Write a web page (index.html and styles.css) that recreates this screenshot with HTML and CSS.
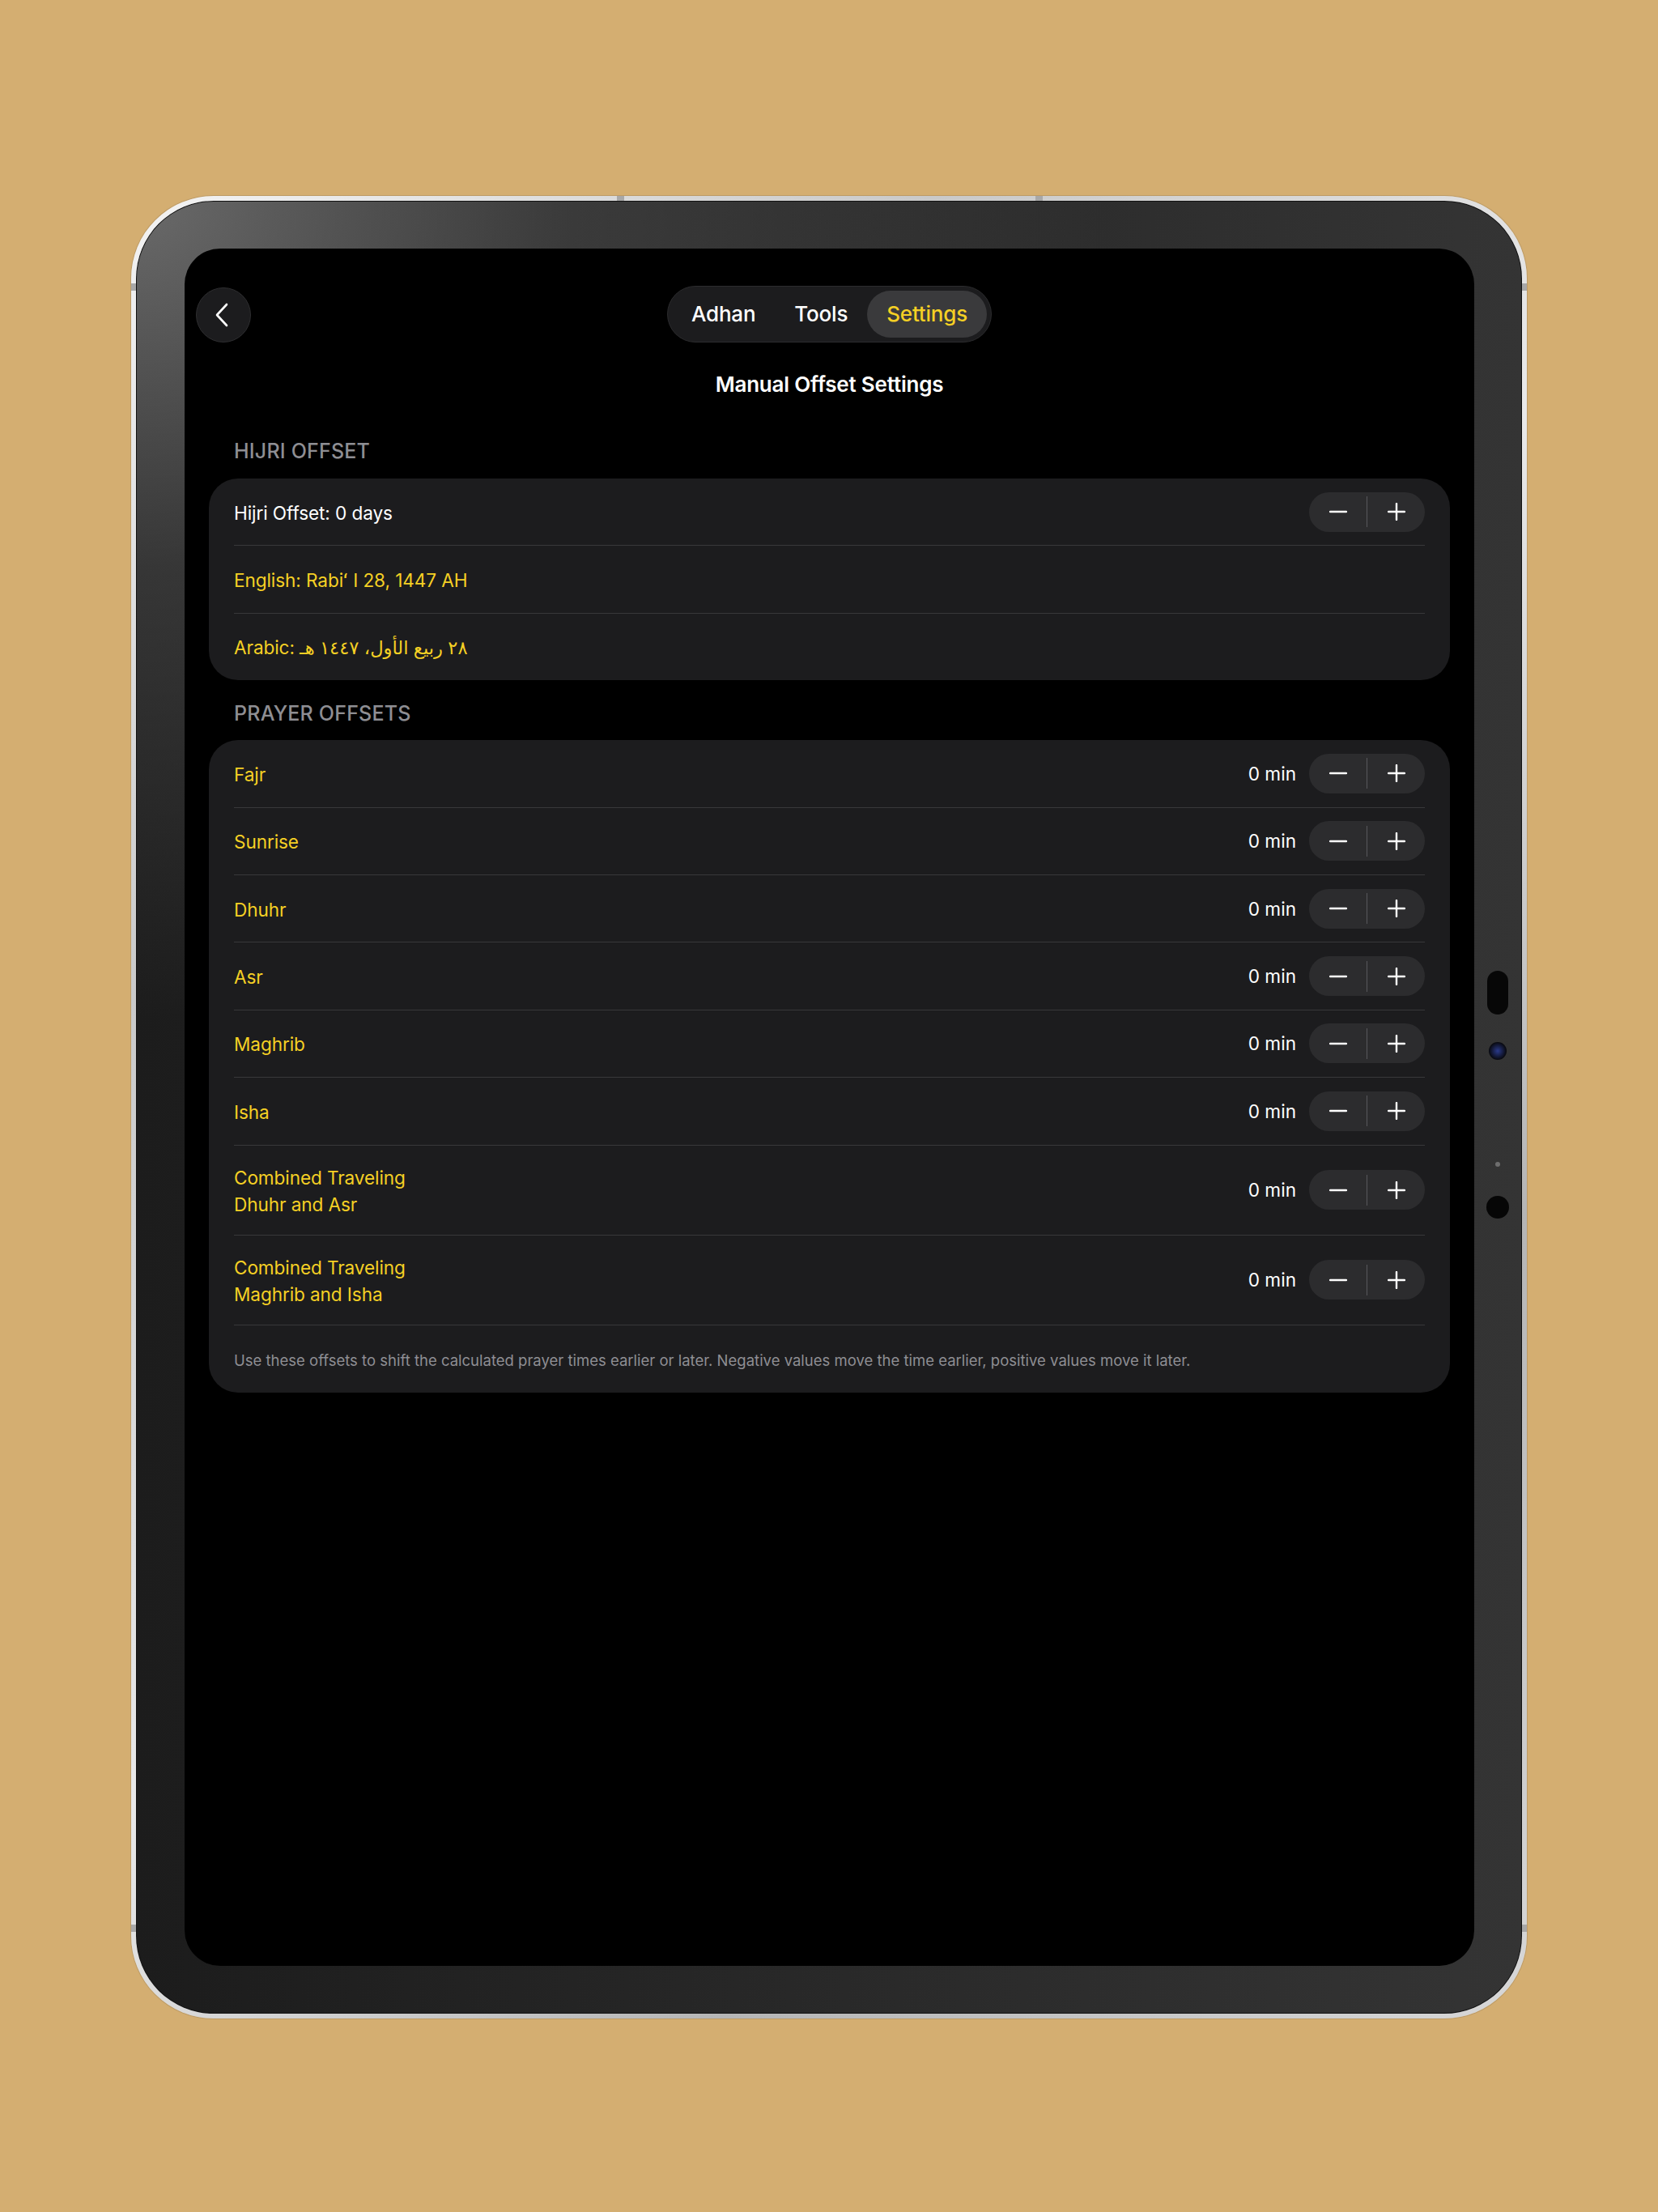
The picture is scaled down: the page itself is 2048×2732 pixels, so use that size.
FILE: index.html
```html
<!DOCTYPE html>
<html lang="en">
<head>
<meta charset="utf-8">
<title>Manual Offset Settings</title>
<link rel="stylesheet" href="styles.css">
</head>
<body>
<div class="device">
  <span class="notch notch-top-a"></span>
  <span class="notch notch-top-b"></span>
  <span class="notch notch-left-a"></span>
  <span class="notch notch-left-b"></span>
  <span class="notch notch-right-a"></span>
  <span class="notch notch-right-b"></span>
  <div class="bezel">
    <span class="sensor"></span>
    <span class="lens"></span>
    <span class="dot"></span>
    <span class="hole"></span>
    <div class="screen">
      <div class="topbar">
        <button class="back" aria-label="Back">
          <svg width="18" height="30" viewBox="0 0 18 30"><path d="M15 2 L3 15 L15 28" fill="none" stroke="#fff" stroke-width="2.6" stroke-linecap="round" stroke-linejoin="round"/></svg>
        </button>
        <div class="tabs">
          <span class="tab">Adhan</span>
          <span class="tab">Tools</span>
          <span class="tab active">Settings</span>
        </div>
        <div class="spacer"></div>
      </div>

      <h1 class="title">Manual Offset Settings</h1>

      <div class="section-header hijri-header">HIJRI OFFSET</div>
      <div class="card">
        <div class="row">
          <span class="label white">Hijri Offset: 0 days</span>
          <div class="stepper">
            <span class="step"><svg width="22" height="22" viewBox="0 0 22 22"><path d="M1 11H21" stroke="#fff" stroke-width="2.4" stroke-linecap="round"/></svg></span>
            <span class="divider"></span>
            <span class="step"><svg width="22" height="22" viewBox="0 0 22 22"><path d="M1 11H21M11 1V21" stroke="#fff" stroke-width="2.4" stroke-linecap="round"/></svg></span>
          </div>
        </div>
        <div class="row"><span class="label">English: Rabiʻ I 28, 1447 AH</span></div>
        <div class="row"><span class="label">Arabic: ٢٨ ربيع الأول، ١٤٤٧ هـ</span></div>
      </div>

      <div class="section-header prayer-header">PRAYER OFFSETS</div>
      <div class="card">
        <div class="row">
          <span class="label">Fajr</span>
          <span class="value">0 min</span>
          <div class="stepper">
            <span class="step"><svg width="22" height="22" viewBox="0 0 22 22"><path d="M1 11H21" stroke="#fff" stroke-width="2.4" stroke-linecap="round"/></svg></span>
            <span class="divider"></span>
            <span class="step"><svg width="22" height="22" viewBox="0 0 22 22"><path d="M1 11H21M11 1V21" stroke="#fff" stroke-width="2.4" stroke-linecap="round"/></svg></span>
          </div>
        </div>
        <div class="row">
          <span class="label">Sunrise</span>
          <span class="value">0 min</span>
          <div class="stepper">
            <span class="step"><svg width="22" height="22" viewBox="0 0 22 22"><path d="M1 11H21" stroke="#fff" stroke-width="2.4" stroke-linecap="round"/></svg></span>
            <span class="divider"></span>
            <span class="step"><svg width="22" height="22" viewBox="0 0 22 22"><path d="M1 11H21M11 1V21" stroke="#fff" stroke-width="2.4" stroke-linecap="round"/></svg></span>
          </div>
        </div>
        <div class="row">
          <span class="label">Dhuhr</span>
          <span class="value">0 min</span>
          <div class="stepper">
            <span class="step"><svg width="22" height="22" viewBox="0 0 22 22"><path d="M1 11H21" stroke="#fff" stroke-width="2.4" stroke-linecap="round"/></svg></span>
            <span class="divider"></span>
            <span class="step"><svg width="22" height="22" viewBox="0 0 22 22"><path d="M1 11H21M11 1V21" stroke="#fff" stroke-width="2.4" stroke-linecap="round"/></svg></span>
          </div>
        </div>
        <div class="row">
          <span class="label">Asr</span>
          <span class="value">0 min</span>
          <div class="stepper">
            <span class="step"><svg width="22" height="22" viewBox="0 0 22 22"><path d="M1 11H21" stroke="#fff" stroke-width="2.4" stroke-linecap="round"/></svg></span>
            <span class="divider"></span>
            <span class="step"><svg width="22" height="22" viewBox="0 0 22 22"><path d="M1 11H21M11 1V21" stroke="#fff" stroke-width="2.4" stroke-linecap="round"/></svg></span>
          </div>
        </div>
        <div class="row">
          <span class="label">Maghrib</span>
          <span class="value">0 min</span>
          <div class="stepper">
            <span class="step"><svg width="22" height="22" viewBox="0 0 22 22"><path d="M1 11H21" stroke="#fff" stroke-width="2.4" stroke-linecap="round"/></svg></span>
            <span class="divider"></span>
            <span class="step"><svg width="22" height="22" viewBox="0 0 22 22"><path d="M1 11H21M11 1V21" stroke="#fff" stroke-width="2.4" stroke-linecap="round"/></svg></span>
          </div>
        </div>
        <div class="row">
          <span class="label">Isha</span>
          <span class="value">0 min</span>
          <div class="stepper">
            <span class="step"><svg width="22" height="22" viewBox="0 0 22 22"><path d="M1 11H21" stroke="#fff" stroke-width="2.4" stroke-linecap="round"/></svg></span>
            <span class="divider"></span>
            <span class="step"><svg width="22" height="22" viewBox="0 0 22 22"><path d="M1 11H21M11 1V21" stroke="#fff" stroke-width="2.4" stroke-linecap="round"/></svg></span>
          </div>
        </div>
        <div class="row">
          <span class="label">Combined Traveling<br>Dhuhr and Asr</span>
          <span class="value">0 min</span>
          <div class="stepper">
            <span class="step"><svg width="22" height="22" viewBox="0 0 22 22"><path d="M1 11H21" stroke="#fff" stroke-width="2.4" stroke-linecap="round"/></svg></span>
            <span class="divider"></span>
            <span class="step"><svg width="22" height="22" viewBox="0 0 22 22"><path d="M1 11H21M11 1V21" stroke="#fff" stroke-width="2.4" stroke-linecap="round"/></svg></span>
          </div>
        </div>
        <div class="row">
          <span class="label">Combined Traveling<br>Maghrib and Isha</span>
          <span class="value">0 min</span>
          <div class="stepper">
            <span class="step"><svg width="22" height="22" viewBox="0 0 22 22"><path d="M1 11H21" stroke="#fff" stroke-width="2.4" stroke-linecap="round"/></svg></span>
            <span class="divider"></span>
            <span class="step"><svg width="22" height="22" viewBox="0 0 22 22"><path d="M1 11H21M11 1V21" stroke="#fff" stroke-width="2.4" stroke-linecap="round"/></svg></span>
          </div>
        </div>
        <p class="footnote">Use these offsets to shift the calculated prayer times earlier or later. Negative values move the time earlier, positive values move it later.</p>
      </div>
    </div>
  </div>
</div>
</body>
</html>
```

FILE: styles.css
```css
html, body {
  margin: 0;
  padding: 0;
}

body {
  background: #d4ae71;
  font-family: Inter, "DejaVu Sans", "Noto Sans", sans-serif;
  overflow: hidden;
  height: 2732px;
}

.device {
  position: relative;
  box-sizing: border-box;
  width: 1724px;
  height: 2251px;
  margin: 242px auto 0;
  padding: 6px;
  border-radius: 102px;
  background: linear-gradient(135deg, #f4f4f4 0%, #c9c9c9 25%, #e9e9e9 50%, #b5b5b5 75%, #d8d8d8 100%);
  box-shadow: 0 0 0 1px rgba(120, 100, 70, 0.25);
}

.notch {
  position: absolute;
  background: #a8a8a8;
}
.notch-top-a { top: 0; left: 600px; width: 9px; height: 6px; }
.notch-top-b { top: 0; left: 1117px; width: 9px; height: 6px; }
.notch-left-a { left: 0; top: 108px; width: 6px; height: 9px; }
.notch-left-b { left: 0; top: 2135px; width: 6px; height: 9px; }
.notch-right-a { right: 0; top: 108px; width: 6px; height: 9px; }
.notch-right-b { right: 0; top: 2135px; width: 6px; height: 9px; }

.bezel {
  position: relative;
  box-sizing: border-box;
  height: 100%;
  padding: 59px 59px 59px 60px;
  border-radius: 96px;
  background:
    radial-gradient(ellipse 70% 45% at 0% 0%, rgba(110, 110, 110, 0.95) 0%, rgba(80, 80, 80, 0.5) 45%, rgba(0, 0, 0, 0) 100%),
    linear-gradient(90deg, #1c1c1c 0%, #2a2a2a 55%, #343434 100%);
  box-shadow: inset 0 0 0 1px #111;
}

.sensor {
  position: absolute;
  left: 1669px;
  top: 951px;
  width: 26px;
  height: 54px;
  border-radius: 13px;
  background: #070707;
}
.lens {
  position: absolute;
  left: 1671px;
  top: 1039px;
  width: 22px;
  height: 22px;
  border-radius: 50%;
  background: radial-gradient(circle at 50% 50%, #2a3a8a 0%, #141a3a 45%, #050505 75%);
}
.dot {
  position: absolute;
  left: 1679px;
  top: 1187px;
  width: 6px;
  height: 6px;
  border-radius: 50%;
  background: #6e6e6e;
}
.hole {
  position: absolute;
  left: 1668px;
  top: 1229px;
  width: 28px;
  height: 28px;
  border-radius: 50%;
  background: #060606;
}

.screen {
  height: 2121px;
  border-radius: 44px;
  background: #000;
  overflow: hidden;
  color: #fff;
}

.topbar {
  display: grid;
  grid-template-columns: 1fr auto 1fr;
  align-items: center;
  padding: 46px 14px 0;
}

.back {
  justify-self: start;
  width: 68px;
  height: 68px;
  margin-top: 1px;
  padding: 0 4px 0 0;
  border-radius: 50%;
  border: 1.5px solid #2e2e30;
  background: #1c1c1e;
  display: flex;
  align-items: center;
  justify-content: center;
  box-sizing: border-box;
}

.tabs {
  display: flex;
  box-sizing: border-box;
  height: 70px;
  padding: 5px;
  border-radius: 35px;
  background: #1c1c1e;
  border: 1.5px solid #2c2c2e;
  align-items: center;
}

.tab {
  height: 58px;
  line-height: 58px;
  padding: 0 24px;
  border-radius: 29px;
  font-size: 26px;
  font-weight: 500;
  color: #fff;
  letter-spacing: -0.2px;
}

.tab.active {
  background: #3a3a3c;
  color: #f5d024;
}

.title {
  margin: 36px 0 0;
  text-align: center;
  font-size: 26px;
  line-height: 32px;
  font-weight: 600;
  letter-spacing: -0.2px;
}

.section-header {
  padding-left: 61px;
  font-size: 25px;
  line-height: 30px;
  font-weight: 500;
  letter-spacing: 0.2px;
  color: #8e8e93;
}

.hijri-header {
  margin: 51px 0 19px;
}

.prayer-header {
  margin: 26px 0 18px;
}

.card {
  margin: 0 30px;
  border-radius: 36px;
  background: #1c1c1e;
}

.row {
  display: flex;
  align-items: center;
  min-height: 82.4px;
  margin: 0 31px 0 31px;
  border-bottom: 1px solid #38383a;
}

.card .row:last-child {
  border-bottom: none;
}

.label {
  flex: 1;
  padding: 23px 0 21px;
  font-size: 22.6px;
  line-height: 33px;
  color: #f5d024;
  letter-spacing: -0.1px;
}

.label.white {
  color: #fff;
}

.value {
  margin-right: 16px;
  font-size: 22.6px;
  line-height: 33px;
  color: #fff;
}

.stepper {
  display: flex;
  align-items: center;
  width: 143px;
  height: 49px;
  border-radius: 25px;
  background: #2c2c2e;
}

.step {
  flex: 1;
  height: 49px;
  display: flex;
  align-items: center;
  justify-content: center;
}

.step svg {
  display: block;
}

.divider {
  width: 1px;
  height: 38px;
  background: #58585c;
}

.footnote {
  margin: 0 31px;
  padding: 32px 0 29px;
  font-size: 18.5px;
  line-height: 22px;
  color: #8e8e93;
}
```
